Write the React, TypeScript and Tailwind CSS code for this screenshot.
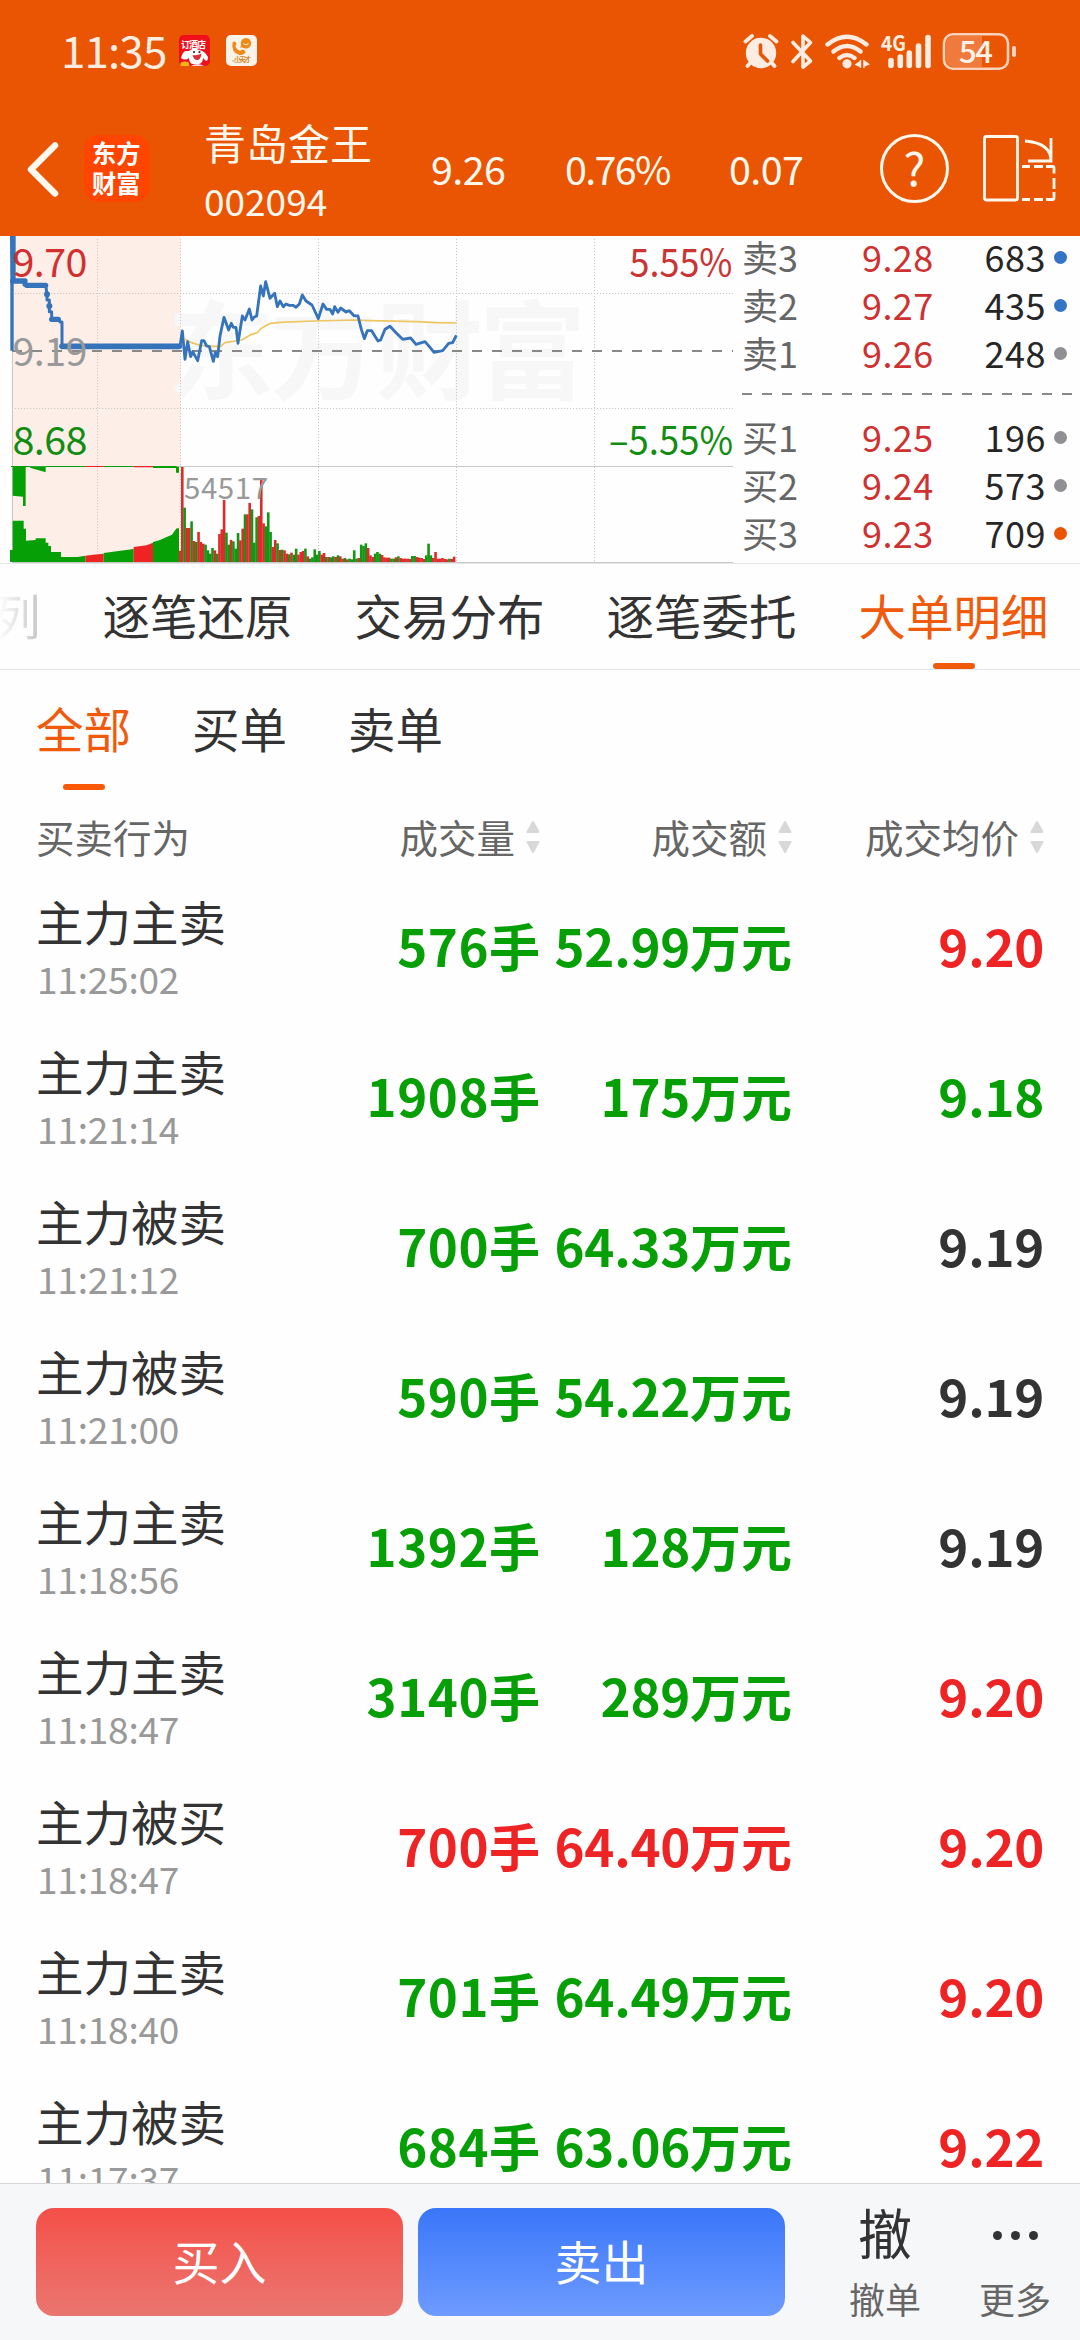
import React from 'react';

const GREEN = '#069f06';
const RED = '#ee2324';

function StatusIcons() {
  return (
    <svg width="276" height="40" viewBox="740 31 276 40" fill="none">
      {/* alarm clock */}
      <circle cx="760" cy="52" r="15.2" fill="#fdece2" />
      <path d="M744.500 40.500l6.500-5.500M775.500 40.500l-6.500-5.500M750 61l-3.500 4M770 61l3.500 4" stroke="#fdece2" strokeWidth="3.8" strokeLinecap="round" />
      <path d="M759.5 44v9l7 7" stroke="#e95502" strokeWidth="3.6" strokeLinecap="round" strokeLinejoin="round" />
      {/* bluetooth */}
      <path d="M792 41.500l17.500 18.500-7.500 6.200V35l7.500 6.500L792 60.500" stroke="#fdece2" strokeWidth="3.600" strokeLinecap="round" strokeLinejoin="round" />
      {/* wifi */}
      <path d="M826.500 43.500q19.500-15.500 39 0M832.500 50.500q13.500-11 27 0M838.500 57q7.500-6 15 0" stroke="#fdece2" strokeWidth="4.400" strokeLinecap="round" />
      <circle cx="846" cy="62.800" r="4.600" fill="#fdece2" />
      <path d="M859.500 59v8M855 63.500l4.500-3v5zM863 59v8M867.500 63l-4.500-3v5z" stroke="#fdece2" strokeWidth="1.500" fill="#fdece2" />
      {/* signal */}
      <text x="880" y="50" fontSize="21" fontWeight="700" fill="#fdece2" textLength="25" lengthAdjust="spacingAndGlyphs">4G</text>
      <path d="M890 59.500v5M899.300 56v8.500M908.300 52v12.500M917.500 45v19.500M927 36.500v28" stroke="#fdece2" strokeWidth="5.600" strokeLinecap="round" />
      {/* battery */}
      <path d="M981 35h-29a7 7 0 0 0-7 7v17a7 7 0 0 0 7 7h29z" fill="#ef7a3c" />
      <rect x="943" y="33.200" width="64" height="34.600" rx="9" stroke="#fbd3bc" strokeWidth="2.600" />
      <rect x="1011" y="45" width="4" height="11" rx="1.800" fill="#fbd3bc" />
      <text x="958" y="62" fontSize="31" fontWeight="500" fill="#fdf1ea" textLength="34">54</text>
    </svg>
  );
}

function HotelAppIcon() {
  return (
    <svg width="31" height="31" viewBox="0 0 31 31">
      <rect width="31" height="31" rx="5" fill="#f0101c" />
      <text x="2" y="13" fontSize="9" fontWeight="700" fill="#fff" textLength="25">订酒店</text>
      <path d="M2 23q2-8 6-7 1 0 3-.500Q14 12.500 20 15q6 1 9 7 0 4-2 4l-3-3q0 5-4 6l-7 0q-3-2-3-6-4 3-8 0z" fill="#fff" />
      <path d="M13.500 20q5 1 9-1.500-1 7-4 6.500-4 0-5-5z" fill="#d9303a" />
      <circle cx="15" cy="17" r="1.100" fill="#222" />
      <circle cx="20.500" cy="17" r="1.100" fill="#222" />
      <path d="M1.500 31v-3q2-2.500 8-1l1 4z" fill="#f6b21b" />
      <path d="M12 31q6-4 13 0z" fill="#f3d5e8" />
    </svg>
  );
}

function PhoneAppIcon() {
  return (
    <svg width="31" height="31" viewBox="0 0 31 31">
      <rect width="31" height="31" rx="5" fill="#faf3ea" />
      <circle cx="20" cy="8.200" r="5.200" fill="#f08a16" />
      <path d="M14 12.500l3-5 3 5z" fill="#f08a16" />
      <path d="M17.500 8.800q2.500 1.800 5 0" stroke="#faf3ea" fill="none" strokeWidth="1" />
      <path d="M6.500 7.500q2.500-2.500 4 1l-1 3q1 3 4.500 4.500l2-1.500q4 1 3.500 3-2 3-6 2.500Q5 18 6.500 7.500z" fill="#f08a16" />
      <text x="8" y="26.500" fontSize="7" fontWeight="700" fill="#d98a2b" textLength="17">小天才</text>
      <path d="M6 25.500q3 3 9 2" stroke="#e0b070" fill="none" strokeWidth="1" />
    </svg>
  );
}

function Header() {
  return (
    <header className="h-[236px] shrink-0 bg-[#e95502] text-[#fff8ef]">
      <div className="flex h-[105px] items-center pl-[61px] pr-[63px]">
        <span className="mt-[-8px] w-[118px] text-[44px] leading-[66px] tracking-[-0.900px] text-[#fdece2]">11:35</span>
        <div className="mt-[-4px] flex gap-4">
          <HotelAppIcon />
          <PhoneAppIcon />
        </div>
        <div className="ml-auto mt-[-3px] pt-[1px]">
          <StatusIcons />
        </div>
      </div>
      <div className="flex h-[127px] items-center">
        <svg className="ml-[24px]" width="36" height="60" viewBox="24 138 36 60" fill="none" stroke="#fff8ef" strokeWidth="6.500" strokeLinecap="round" strokeLinejoin="round">
          <path d="M55 144.500L31 168.500l24 24" />
        </svg>
        <div className="ml-6 h-[67px] w-[66px] rounded-[15px] bg-[#ff4500]">
          <svg width="66" height="67" viewBox="84 135 66 67" fontSize="25.500" fontWeight="700" fill="#fff">
            <text x="92" y="162.500" textLength="48.500" lengthAdjust="spacingAndGlyphs">东方</text>
            <text x="92" y="192.500" textLength="48.500" lengthAdjust="spacingAndGlyphs">财富</text>
          </svg>
        </div>
        <div className="ml-[54px] mt-[2px] flex w-[227px] flex-col">
          <span className="text-[42px] leading-[61px]">青岛金王</span>
          <span className="text-[37px] leading-[56px]">002094</span>
        </div>
        <span className="w-[134px] pb-[2px] text-[39.500px] leading-none tracking-[-0.600px]">9.26</span>
        <span className="w-[164px] pb-[2px] text-[39.500px] leading-none tracking-[-1.700px]">0.76%</span>
        <span className="w-[151px] pb-[2px] text-[39.500px] leading-none tracking-[-0.600px]">0.07</span>
        <div className="flex h-[69px] w-[69px] items-center justify-center rounded-full border-[3px] border-[#fff8ef] pb-[5px] text-[46px] leading-none">?</div>
        <svg className="ml-[33px]" width="76" height="70" viewBox="981 134 76 70" fill="none" stroke="#fff8ef" strokeWidth="2.800">
          <rect x="983.500" y="136.500" width="33" height="63.500" rx="2" />
          <path d="M1024 141q26 2 26 20M1050 138v23h-23" />
          <path d="M1021 166.500h8M1033 166.500h9M1045 166.500h6.500q1.500 0 1.500 1.500v5.500M1053 178v11M1053 192v6q0 1.500-1.500 1.500H1045M1042 199.500h-9M1029 199.500h-8" />
        </svg>
      </div>
    </header>
  );
}

/* One bar per minute: colour letter followed by bar height. */
const VOLUME = (
  'r285 g163 r102 r102 g122 r63 g60 r90 r60 r55 g52 g35 g25 g42 r35 g25 r84 r98 r186 g88 g52 r66 g62 g40 g87 r65 r100 g143 r143 r177 ' +
  'g158 g58 g134 r138 r250 r116 g107 g149 g90 r45 r66 g56 r36 g37 r35 r25 g23 r28 g22 g40 r22 r30 r33 g40 r17 g10 g14 g38 g22 g33 ' +
  'r22 r27 g15 r15 g14 g17 r15 g20 r17 r10 g12 r8 g10 g8 g35 g10 r12 g52 g48 g56 r42 r20 r15 g25 g30 g25 r21 r14 r13 r13 ' +
  'g10 g10 r14 g17 r12 r10 r10 r10 r9 g18 g18 r15 r13 r12 r9 g20 g55 g20 r12 r30 r10 r10 r12 r9 r8 g10 r9 r16'
).split(' ');

const PRICE =
  '540,349 547,303 555,388 563,335 572,380 578,365 593,392 605,332 612,332 620,348 628,350 640,394 646,368 653,380 660,318 672,262 686,300 694,280 700,292 708,292 714,340 727,258 735,270 748,237 756,270 762,262 770,258 782,168 790,198 797,155 810,205 824,190 832,230 840,213 850,230 858,222 868,226 880,226 888,232 898,222 907,195 918,213 936,225 955,266 969,222 980,238 990,238 998,252 1004,230 1014,247 1022,234 1038,246 1048,242 1062,257 1074,258 1084,298 1093,326 1102,302 1115,302 1126,320 1134,333 1142,330 1155,298 1170,289 1188,308 1208,328 1232,324 1248,343 1275,335 1290,352 1302,367 1328,362 1346,340 1358,338 1369,316';

const AVERAGE =
  '555,328 575,338 600,346 640,349 662,349 675,338 725,330 752,314 772,308 782,296 808,281 840,277 940,273 1060,270 1110,272 1250,275 1310,278 1369,279';

function Chart() {
  return (
    <svg className="shrink-0" width="738" height="327" viewBox="0 236 738 327">
      <rect x="13" y="236" width="167.500" height="327" fill="#fdeee8" />
      <g fontWeight="700" fontSize="107" fill="#f7f7f7">
        <text x="167" y="391">东</text>
        <text x="270" y="391">方</text>
        <text x="376" y="391">财</text>
        <text x="479" y="391">富</text>
      </g>
      <g stroke="#c8c8c8" strokeWidth="1" strokeDasharray="1.200 1.800">
        {[97.5, 180.5, 318.5, 456.5, 594.5].map((x) => (
          <path key={x} d={`M${x} 239V562`} />
        ))}
        <path d="M15 293.500H733M15 408.500H733" />
      </g>
      <path d="M12.500 351V563M12 466.500H733M12 562.500H733" stroke="#c8c8c8" />
      <path d="M12 351H733" stroke="#888" strokeWidth="2" strokeDasharray="10 10" />
      <g transform="translate(0 230) scale(.33333)">
        <path d="M38 710H77V828H69V800L38 797zM90 713L137 727V710H90zM528 710H537V728H528zM33 708H256V711H33zM311 708H401V711H311zM459 708H530V714H459z" fill={GREEN} />
        <path d="M256 708H311V711H256zM401 708H459V712H401z" fill={RED} />
        <path d="M30 996V960H38V872H71V896H78V932L107 930V925H137V938H145V948H153V966H183V981H232L256 977V996z" fill={GREEN} />
        <path d="M256 977L280 974L311 971V996H256z" fill={RED} />
        <path d="M311 969L350 964L401 957V996H311z" fill={GREEN} />
        <path d="M401 951L440 946L459 938V996H401z" fill={RED} />
        <path d="M459 936L478 931L500 921L516 914L523 904L530 895H537V996H459z" fill={GREEN} />
        <rect x="537" y="962" width="6" height="34" fill="#d8302f" />
        {VOLUME.map((bar, i) => {
          const height = Number(bar.slice(1));
          return (
            <rect key={i} x={543 + i * 6.97} y={996 - height} width="7.800" height={height} fill={bar[0] === 'r' ? '#dd2b2b' : '#149614'} />
          );
        })}
        <polyline points={AVERAGE} fill="none" stroke="#efc560" strokeWidth="5" strokeLinejoin="round" />
        <g fill="none" stroke="#3573bb" strokeLinejoin="round">
          <path d="M30 18H47V150H41V362H31V150z" fill="#3573bb" stroke="none" />
          <path d="M38 153H75M80 166H137M155 268H175" strokeWidth="16" strokeLinecap="round" />
          <path d="M72 153V165H80M137 165L141 193V210H148V245H155V268H175L180 276H186V349" strokeWidth="9" />
          <path d="M141 193h.1M148 228h.1" strokeWidth="18" strokeLinecap="round" />
          <path d="M186 349H538" strokeWidth="17" strokeLinecap="round" />
          <polyline points={PRICE} strokeWidth="8.500" />
        </g>
      </g>
      <g fontSize="39.500">
        <text x="12.500" y="277" fill="#d32f2f" textLength="75">9.70</text>
        <text x="12.500" y="366" fill="#999" textLength="75">9.19</text>
        <text x="12.500" y="455" fill="#128d12" textLength="75">8.68</text>
        <text x="629.500" y="277" fill="#c93434" textLength="103" lengthAdjust="spacingAndGlyphs">5.55%</text>
        <text x="609" y="455" fill="#128d12" textLength="124" lengthAdjust="spacingAndGlyphs">–5.55%</text>
        <text x="184" y="498.500" fill="#999" fontSize="29.500" textLength="84">54517</text>
      </g>
    </svg>
  );
}

type Quote = { label: string; price: string; volume: string; dot: string };

const ASKS: Quote[] = [
  { label: '卖3', price: '9.28', volume: '683', dot: 'bg-[#3374c4]' },
  { label: '卖2', price: '9.27', volume: '435', dot: 'bg-[#3374c4]' },
  { label: '卖1', price: '9.26', volume: '248', dot: 'bg-[#8f8f94]' },
];

const BIDS: Quote[] = [
  { label: '买1', price: '9.25', volume: '196', dot: 'bg-[#8f8f94]' },
  { label: '买2', price: '9.24', volume: '573', dot: 'bg-[#8f8f94]' },
  { label: '买3', price: '9.23', volume: '709', dot: 'bg-[#e95502]' },
];

function QuoteRow({ label, price, volume, dot }: Quote) {
  return (
    <div className="flex h-12 items-center text-[36px] leading-[48px]">
      <span className="w-[120px] text-[#666]">{label}</span>
      <span className="tracking-[0.400px] text-[#cf3030]">{price}</span>
      <span className="ml-auto tracking-[0.500px] text-[#262626]">{volume}</span>
      <span className={`ml-[8px] mt-[3px] h-[13px] w-[13px] rounded-full ${dot}`} />
    </div>
  );
}

function OrderBook() {
  return (
    <div className="mt-[-4px] w-[342px] pl-[4px]">
      <div className="w-[325px]">
        {ASKS.map((q) => (
          <QuoteRow key={q.label} {...q} />
        ))}
      </div>
      <div className="flex h-9 items-center">
        <svg width="334" height="2">
          <path d="M0 1H332" stroke="#888" strokeWidth="2" strokeDasharray="10 10" />
        </svg>
      </div>
      <div className="w-[325px]">
        {BIDS.map((q) => (
          <QuoteRow key={q.label} {...q} />
        ))}
      </div>
    </div>
  );
}

function Tabs() {
  return (
    <nav className="flex h-[106px] shrink-0 border-b border-[#e5e5e5] text-[47.500px] leading-[101px] text-[#333]">
      <div className="ml-[-7px] flex gap-[62px] whitespace-nowrap">
        <span className="bg-gradient-to-r from-white from-10% to-[#c4c4c4] bg-clip-text text-transparent">列</span>
        <span>逐笔还原</span>
        <span>交易分布</span>
        <span>逐笔委托</span>
        <span className="flex flex-col items-center text-[#ef5a0c]">
          <span className="h-[99px]">大单明细</span>
          <span className="h-[6px] w-[42px] rounded-full bg-[#ef5a0c]" />
        </span>
      </div>
    </nav>
  );
}

function SubTabs() {
  return (
    <div className="flex h-[126px] shrink-0 gap-[61px] pl-[36px] pt-[7px] text-[47.500px] leading-[102px] text-[#333]">
      <span className="flex flex-col items-center text-[#f05a0a]">
        <span className="h-[107px]">全部</span>
        <span className="h-[6px] w-[42px] rounded-full bg-[#fa5a08]" />
      </span>
      <span>买单</span>
      <span>卖单</span>
    </div>
  );
}

function SortArrows() {
  return (
    <svg className="ml-[11px] mt-[2px]" width="14" height="34" viewBox="0 0 14 34" fill="#d8d8d8" stroke="#d8d8d8" strokeWidth="2" strokeLinejoin="round">
      <path d="M7 2L12.500 12H1.500zM7 32L12.500 22H1.500z" />
    </svg>
  );
}

const COLUMNS = 'grid grid-cols-[274px_266px_252px_252px] pr-[36px]';

function TableHead() {
  return (
    <div className={`${COLUMNS} h-20 shrink-0 items-center text-[38.500px] leading-[56px] text-[#666]`}>
      <span className="pl-[36px]">买卖行为</span>
      <span className="flex items-center justify-end">成交量<SortArrows /></span>
      <span className="flex items-center justify-end">成交额<SortArrows /></span>
      <span className="flex items-center justify-end">成交均价<SortArrows /></span>
    </div>
  );
}

const G = 'text-[#069f06]';
const R = 'text-[#ee2324]';
const K = 'text-[#333]';

const TRADES = [
  ['主力主卖', '11:25:02', '576', '52.99', '9.20', G, R],
  ['主力主卖', '11:21:14', '1908', '175', '9.18', G, G],
  ['主力被卖', '11:21:12', '700', '64.33', '9.19', G, K],
  ['主力被卖', '11:21:00', '590', '54.22', '9.19', G, K],
  ['主力主卖', '11:18:56', '1392', '128', '9.19', G, K],
  ['主力主卖', '11:18:47', '3140', '289', '9.20', G, R],
  ['主力被买', '11:18:47', '700', '64.40', '9.20', R, R],
  ['主力主卖', '11:18:40', '701', '64.49', '9.20', G, R],
  ['主力被卖', '11:17:37', '684', '63.06', '9.22', G, R],
];

function TradeList() {
  return (
    <div className="min-h-0 flex-1 overflow-hidden">
      {TRADES.map(([action, time, lots, amount, price, tone, priceTone], i) => (
        <div key={i} className={`${COLUMNS} h-[150px] text-right text-[51px] font-bold leading-[139px]`}>
          <div className="flex flex-col gap-[9px] pl-[36px] pt-[18px] text-left font-normal">
            <span className="whitespace-nowrap text-[47.500px] leading-[54px] text-[#333]">{action}</span>
            <span className="pl-px text-[37px] leading-[43px] tracking-[-0.200px] text-[#999]">{time}</span>
          </div>
          <span className={tone}><span className="tracking-[0.500px]">{lots}</span>手</span>
          <span className={`whitespace-nowrap ${tone}`}><span className="tracking-[-0.300px]">{amount}</span>万元</span>
          <span className={`tracking-[-0.300px] ${priceTone}`}>{price}</span>
        </div>
      ))}
    </div>
  );
}

function BottomBar() {
  return (
    <footer className="flex h-[157px] shrink-0 border-t border-[#d5d6d9] bg-[#f6f7f9] pl-9 pt-6">
      <button className="h-[108px] w-[367px] rounded-[18px] bg-gradient-to-b from-[#f44f48] to-[#ea7570] pb-[5px] text-[47px] leading-none text-white">买入</button>
      <button className="ml-[15px] h-[108px] w-[367px] rounded-[18px] bg-gradient-to-b from-[#3a76f9] to-[#6d9bff] pb-[5px] text-[47px] leading-none text-white">卖出</button>
      <div className="ml-[50px] flex w-[100px] flex-col items-center">
        <span className="mt-[-4px] h-[71px] text-[54px] leading-[56px] text-[#333]">撤</span>
        <span className="text-[36px] leading-[46px] text-[#666]">撤单</span>
      </div>
      <div className="ml-[30px] flex w-[100px] flex-col items-center">
        <span className="flex h-[67px] items-center gap-[9px] pb-[12px]">
          <i className="h-[9px] w-[9px] rounded-full bg-[#333]" />
          <i className="h-[9px] w-[9px] rounded-full bg-[#333]" />
          <i className="h-[9px] w-[9px] rounded-full bg-[#333]" />
        </span>
        <span className="text-[36px] leading-[46px] text-[#666]">更多</span>
      </div>
    </footer>
  );
}

export default function App() {
  return (
    <div className="flex h-[2340px] w-[1080px] flex-col overflow-hidden bg-[#fefefe] font-['Noto_Sans_CJK_SC',sans-serif]">
      <Header />
      <section className="flex h-[328px] shrink-0 overflow-hidden border-b border-[#e5e5e5]">
        <Chart />
        <OrderBook />
      </section>
      <Tabs />
      <SubTabs />
      <TableHead />
      <TradeList />
      <BottomBar />
    </div>
  );
}
